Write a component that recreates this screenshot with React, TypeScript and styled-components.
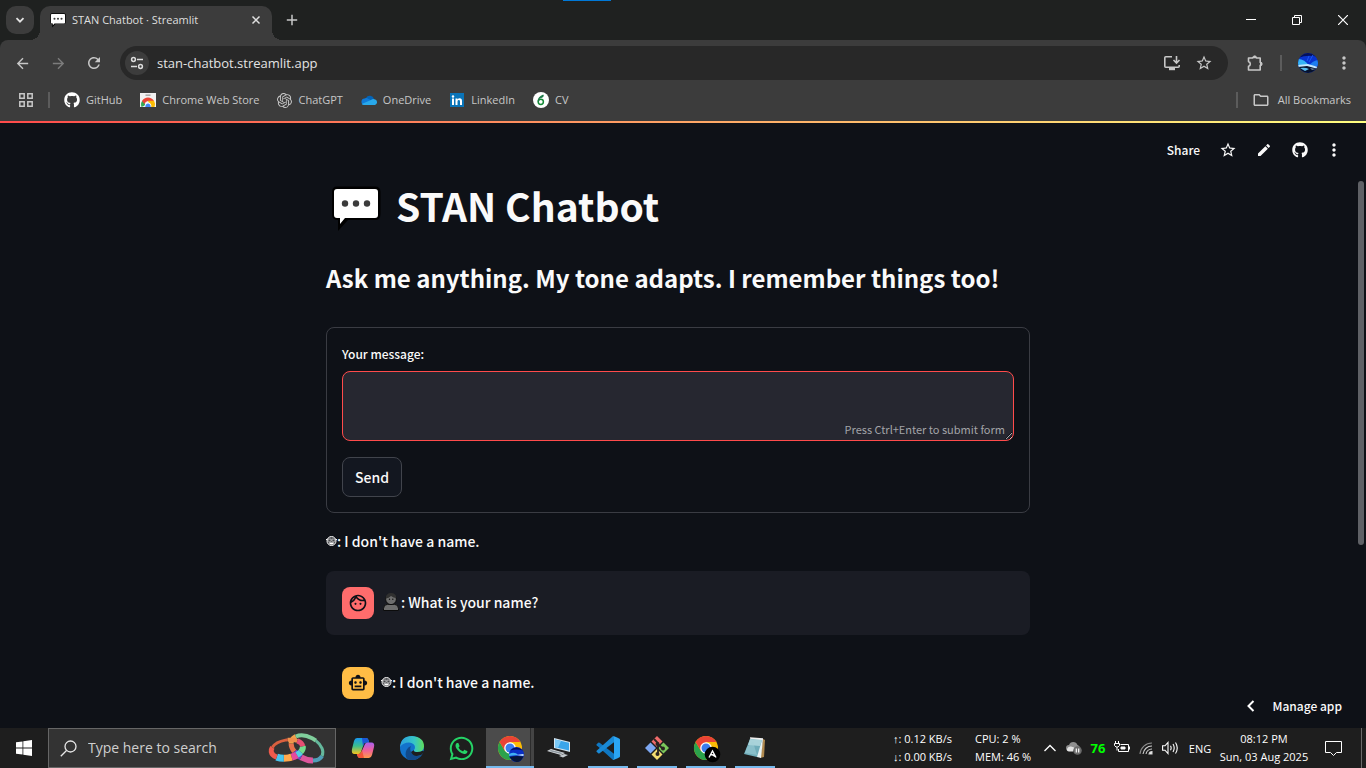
import React from "react";
import styled, { createGlobalStyle, css } from "styled-components";
import {
  MdArrowBack,
  MdArrowForward,
  MdRefresh,
  MdOutlineStarBorder,
  MdEdit,
  MdMoreVert,
  MdOutlineFolder,
  MdOutlineFace,
  MdOutlineSmartToy,
} from "react-icons/md";
import { FaGithub, FaWhatsapp } from "react-icons/fa";
import { SiOpenai } from "react-icons/si";

const uiFont = `"Open Sans", "Noto Sans", sans-serif`;
const appFont = `"Noto Sans CJK SC", "Noto Sans", sans-serif`;

const GlobalStyle = createGlobalStyle`
  * { box-sizing: border-box; }
  body { margin: 0; background: #0e1117; font-family: ${uiFont}; }
  button, input, textarea { font: inherit; color: inherit; }
  svg { display: block; flex: none; }
`;

const Screen = styled.div`
  display: flex;
  flex-direction: column;
  height: 100vh;
  overflow: hidden;
  position: relative;
`;

const TopMarker = styled.div`
  position: absolute;
  top: 0;
  left: 563px;
  width: 48px;
  height: 1px;
  background: #0078d7;
`;

/* ---------- Browser frame ---------- */

const TabStrip = styled.div`
  display: flex;
  align-items: center;
  height: 40px;
  padding-left: 6px;
  background: #1f2120;
  color: #dfdfdf;
`;

const PlainButton = styled.button`
  display: flex;
  align-items: center;
  justify-content: center;
  padding: 0;
  border: 0;
  background: none;
`;

const TabSearch = styled(PlainButton)`
  width: 28px;
  height: 28px;
  border-radius: 10px;
  background: #3c3c3c;
`;

const Tab = styled.div`
  position: relative;
  display: flex;
  align-items: center;
  align-self: flex-end;
  width: 232px;
  height: 34px;
  margin-left: 6px;
  padding: 0 6px 6px 10px;
  border-radius: 10px 10px 0 0;
  background: #3c3c3c;

  &::before,
  &::after {
    content: "";
    position: absolute;
    bottom: 0;
    width: 10px;
    height: 10px;
  }
  &::before {
    left: -10px;
    background: radial-gradient(circle at 0 0, transparent 10px, #3c3c3c 10px);
  }
  &::after {
    right: -10px;
    background: radial-gradient(circle at 100% 0, transparent 10px, #3c3c3c 10px);
  }
`;

const TabTitle = styled.span`
  flex: 1;
  padding-left: 6px;
  font-size: 11px;
  line-height: 16px;
  white-space: nowrap;
`;

const TabButton = styled(PlainButton)`
  width: 20px;
  height: 20px;
`;

const NewTab = styled(PlainButton)`
  width: 28px;
  height: 28px;
  margin-left: 6px;
`;

const WindowControls = styled.div`
  display: flex;
  margin-left: auto;
`;

const WindowButton = styled(PlainButton)`
  width: 46px;
  height: 40px;
`;

const FrameCorner = styled.div`
  background: #1f2120;
`;

const Toolbar = styled.div`
  display: flex;
  align-items: center;
  height: 46px;
  padding: 0 4px;
  border-radius: 8px 8px 0 0;
  background: #3c3c3c;
  color: #c7c7c7;
`;

const ToolButton = styled(PlainButton)<{ $dim?: boolean }>`
  width: 36px;
  height: 34px;
  color: ${(p) => (p.$dim ? "#7c7c7c" : "#c7c7c7")};
`;

const AddressBar = styled.div`
  display: flex;
  flex: 1;
  align-items: center;
  height: 34px;
  margin: 0 9px 0 8px;
  padding: 0 8px 0 5px;
  border-radius: 17px;
  background: #282828;
`;

const SiteInfo = styled(PlainButton)`
  width: 24px;
  height: 24px;
  border-radius: 12px;
  background: #3c3c3c;
`;

const AddressInput = styled.input`
  flex: 1;
  min-width: 0;
  padding: 0 0 0 8px;
  border: 0;
  outline: 0;
  background: none;
  color: #e3e3e3;
  font-size: 13px;
  line-height: 20px;
`;

const PillButton = styled(PlainButton)`
  width: 32px;
  height: 32px;
  color: #c7c7c7;
`;

const Divider = styled.span`
  width: 2px;
  height: 16px;
  background: #5c5c5c;
`;

const ToolDivider = styled(Divider)`
  margin: 0 8px 0 7px;
`;

const BookmarkBar = styled.nav`
  display: flex;
  align-items: center;
  height: 35px;
  padding: 0 15px 7px 18px;
  background: #3c3c3c;
  color: #c7c7c7;
`;

const BookmarkDivider = styled(Divider)`
  margin: 0 14px;
`;

const Bookmarks = styled.div`
  display: flex;
  flex: 1;
  align-items: center;
  gap: 18px;
`;

const BookmarkLink = styled.a`
  display: flex;
  align-items: center;
  gap: 6px;
  color: #c7c7c7;
  font-size: 11px;
  line-height: 16px;
  text-decoration: none;
  white-space: nowrap;
`;

const AllBookmarks = styled(BookmarkLink)`
  gap: 8px;
`;

/* ---------- Streamlit page ---------- */

const Page = styled.main`
  position: relative;
  display: flex;
  flex: 1;
  flex-direction: column;
  min-height: 0;
  background: #0e1117;
  color: #fafafa;
  font-family: ${appFont};
  font-weight: 500;
`;

const Decoration = styled.div`
  flex: none;
  height: 2px;
  background: linear-gradient(90deg, #ff4b4b, #ffff80);
`;

const AppHeader = styled.header`
  display: flex;
  flex: none;
  align-items: center;
  justify-content: flex-end;
  height: 54px;
  padding-right: 16px;
`;

const ShareButton = styled(PlainButton)`
  margin-right: 10px;
  font-size: 12px;
  line-height: 20px;
`;

const AppHeaderButton = styled(PlainButton)<{ $narrow?: boolean }>`
  width: ${(p) => (p.$narrow ? "32px" : "36px")};
  height: 32px;
`;

const Scroller = styled.div`
  display: flex;
  flex: 1;
  min-height: 0;
  overflow: hidden;
`;

const ScrollTrack = styled.div`
  width: 10px;
  padding: 4px 2px;
`;

const ScrollThumb = styled.div`
  width: 6px;
  height: 67%;
  border-radius: 3px;
  background: #5f6166;
`;

const Column = styled.div`
  flex: 1;
  min-width: 0;
`;

const Content = styled.div`
  display: flex;
  flex-direction: column;
  gap: 16px;
  max-width: 704px;
  margin: 0 auto;
  padding-top: 4px;
`;

const Title = styled.h1`
  display: flex;
  align-items: flex-start;
  gap: 15px;
  margin: 0;
  padding-left: 5px;
  height: 54px;
  font-size: 39px;
  font-weight: 700;
  line-height: 48px;
  white-space: nowrap;

  svg {
    margin-top: 5px;
  }
`;

const Subtitle = styled.h3`
  margin: 0;
  padding: 10px 0 16px;
  font-size: 24px;
  font-weight: 700;
  line-height: 34px;
  white-space: nowrap;
`;

const Form = styled.form`
  display: flex;
  flex-direction: column;
  align-items: flex-start;
  padding: 15px;
  border: 1px solid #3a3c43;
  border-radius: 8px;
`;

const Label = styled.label`
  margin-bottom: 6px;
  font-size: 12px;
  line-height: 22px;
`;

const InputWrap = styled.div`
  position: relative;
  display: flex;
  width: 100%;
  margin-bottom: 16px;
`;

const MessageInput = styled.textarea`
  width: 100%;
  height: 70px;
  padding: 12px;
  border: 1px solid #ff4b4b;
  border-radius: 8px;
  outline: 0;
  background: #262730;
  font-size: 14px;
  resize: vertical;
`;

const InputHint = styled.span`
  position: absolute;
  right: 9px;
  bottom: 4px;
  color: #a3a4a8;
  font-size: 11px;
  font-weight: 400;
  line-height: 16px;
  pointer-events: none;
`;

const SendButton = styled(PlainButton)`
  height: 40px;
  padding: 0 12px;
  border: 1px solid #41444c;
  border-radius: 8px;
  background: #131720;
  font-size: 14px;
  line-height: 24px;
`;

const Line = styled.p`
  display: flex;
  align-items: center;
  margin: 0;
  padding-bottom: 2px;
  font-size: 14px;
  line-height: 24px;
  white-space: nowrap;
`;

const ChatMessage = styled.div<{ $user?: boolean }>`
  display: flex;
  align-items: center;
  gap: 7px;
  height: 64px;
  padding: 16px;
  border-radius: 8px;
  ${(p) =>
    p.$user &&
    css`
      background: #1a1c24;
    `}
`;

const Avatar = styled.div<{ $user?: boolean }>`
  display: flex;
  align-items: center;
  justify-content: center;
  width: 32px;
  height: 32px;
  border-radius: 8px;
  background: ${(p) => (p.$user ? "#ff6c6c" : "#ffbd45")};
  color: #0e1117;
`;

const ManageApp = styled(PlainButton)`
  position: absolute;
  right: 24px;
  bottom: 12px;
  gap: 17px;
  font-size: 12px;
  line-height: 20px;
`;

/* ---------- Taskbar ---------- */

const Taskbar = styled.footer`
  display: flex;
  flex: none;
  height: 40px;
  background: #1e1e1e;
  color: #ffffff;
`;

const StartButton = styled(PlainButton)`
  width: 48px;
  height: 40px;
`;

const SearchBox = styled.label`
  display: flex;
  align-items: center;
  width: 288px;
  padding: 0 9px 0 11px;
  border: 1px solid #666666;
  background: #333333;
`;

const SearchInput = styled.input`
  flex: 1;
  min-width: 0;
  padding: 0 0 0 11px;
  border: 0;
  outline: 0;
  background: none;
  font-size: 14px;
  line-height: 20px;

  &::placeholder {
    color: #cfcfcf;
    opacity: 1;
  }
`;

const Apps = styled.div`
  display: flex;
  flex: 1;
  gap: 1px;
  padding-left: 3px;
`;

const AppButton = styled(PlainButton)<{ $open?: boolean; $active?: boolean }>`
  position: relative;
  width: 48px;
  height: 40px;
  background: ${(p) =>
    p.$active ? "linear-gradient(90deg, #4b4b4b 44px, #2c2c2c 44px, #2c2c2c 45px, #444444 45px)" : "none"};

  &::after {
    content: "";
    position: absolute;
    bottom: 0;
    left: ${(p) => (p.$active ? "0" : "4px")};
    right: ${(p) => (p.$active ? "0" : "4px")};
    height: 2px;
    background: ${(p) => (p.$open || p.$active ? "#76b9ed" : "none")};
  }
`;

const Meter = styled.div<{ $wide?: boolean }>`
  display: flex;
  flex-direction: column;
  justify-content: center;
  width: ${(p) => (p.$wide ? "82px" : "63px")};
  font-size: 11px;
  line-height: 18px;
  white-space: nowrap;
`;

const TrayButton = styled(PlainButton)`
  width: 24px;
  height: 40px;
`;

const Temperature = styled.span`
  width: 24px;
  color: #00ff00;
  font-family: "Noto Sans", sans-serif;
  font-size: 13px;
  font-weight: 700;
  line-height: 40px;
  text-align: center;
`;

const LanguageButton = styled(PlainButton)`
  width: 36px;
  font-size: 11px;
`;

const Clock = styled.time`
  display: flex;
  flex-direction: column;
  align-items: center;
  justify-content: center;
  width: 92px;
  font-size: 11px;
  line-height: 18px;
  white-space: nowrap;
`;

const NotificationButton = styled(PlainButton)`
  width: 46px;
`;

const ShowDesktop = styled(PlainButton)`
  width: 5px;
  margin-left: 5px;
  border-left: 1px solid #6a6a6a;
`;

/* ---------- Drawings ---------- */

const SpeechBubble = ({ width, height }: { width: number; height: number }) => (
  <svg width={width} height={height} viewBox="0 0 50 46">
    <path d="M6 .500h38q5.500 0 5.500 5.500v22q0 6-5.500 6H17L7 45V34q-6 0-6-6V6q0-5.500 5-5.500z" fill="#000" />
    <path d="M6 3h38q3 0 3 3v23q0 3-3 3H14l-5 6v-6H6q-3 0-3-3V6q0-3 3-3z" fill="#fff" />
    <circle cx="14" cy="17.500" r="3.200" fill="#3b3b3b" />
    <circle cx="25" cy="17.500" r="3.200" fill="#3b3b3b" />
    <circle cx="36" cy="17.500" r="3.200" fill="#3b3b3b" />
  </svg>
);

const NerdFace = () => (
  <svg width="11" height="12" viewBox="0 0 11 12" overflow="visible">
    <circle cx="5.500" cy="6" r="4.500" fill="#55575b" stroke="#f4f4f4" strokeWidth="1" />
    <path d="M0 4.500h1.500M9.500 4.500H11" stroke="#f4f4f4" strokeWidth="1.200" />
    <path d="M2 4.200h3v2H2zM6 4.200h3v2H6z" fill="#1b1d22" stroke="#d9d9d9" strokeWidth=".700" />
    <path d="M2.800 7.600h5.400Q7.600 9.600 5.500 9.600T2.800 7.600z" fill="#fff" />
  </svg>
);

const PersonSilhouette = () => (
  <svg width="20" height="20" viewBox="0 0 20 20">
    <path d="M2.500 18.500v-2q0-4 4-4.200h7q4 .200 4 4.200v2z" fill="#6e6e6e" stroke="#0c0c0c" />
    <circle cx="10" cy="7.200" r="5.400" fill="#6e6e6e" stroke="#0c0c0c" />
    <path d="M4.600 6.500q.400-5.500 5.400-5.500t5.400 5q-3 0-5.400-2Q8 6 4.600 6.500z" fill="#303030" />
    <circle cx="8.500" cy="7.300" r=".7" fill="#111" />
    <circle cx="11.800" cy="7.300" r=".7" fill="#111" />
  </svg>
);

const ChromeLogo = ({ children }: { children?: React.ReactNode }) => (
  <svg width="24" height="24" viewBox="0 0 24 24" overflow="visible">
    <circle cx="12" cy="12" r="12" fill="#fbbc05" />
    <path d="M12 24A12 12 0 0 1 1.600 6L7 15l5 3 2.500 0z" fill="#2ba24c" />
    <path d="M7 15 1.600 6A12 12 0 0 1 22.400 6H12z" fill="#ea4335" />
    <path d="M12 24l5-9-5 3-5-3z" fill="#2ba24c" />
    <circle cx="12" cy="12" r="5.800" fill="#fff" />
    <circle cx="12" cy="12" r="4.500" fill="#3b7ded" />
    {children}
  </svg>
);

const NightSky = () => (
  <svg width="20" height="20" viewBox="0 0 20 20">
    <defs>
      <clipPath id="skyClip">
        <circle cx="10" cy="10" r="10" />
      </clipPath>
    </defs>
    <g clipPath="url(#skyClip)">
      <rect width="20" height="20" fill="#0833d0" />
      <path d="M0 0h20v4Q10 1 0 5z" fill="#04105c" />
      <path d="M11 3l-2 5M15 2l-4 7" stroke="#1b58f0" strokeWidth="1" />
      <path d="M0 6q7 0 11 7L0 13z" fill="#35b4f6" />
      <path d="M20 7q-6 1-9 6h9z" fill="#1e7df0" />
      <path d="M0 12l10-1 10 3v2l-12-2-8 1z" fill="#c4e8ff" />
      <path d="M0 14l9-1 11 3v4H0z" fill="#07122c" />
      <path d="M2 15q5-1 9 1l-4 2z" fill="#58bdf0" />
      <path d="M12 15l6 1-4 1z" fill="#6b7f96" />
    </g>
  </svg>
);

const InstallGlyph = () => (
  <svg width="18" height="18" viewBox="0 0 18 18" fill="none" stroke="#c7c7c7" strokeWidth="1.600">
    <path d="M9 2.800H2.800q-1 0-1 1v8.400q0 1 1 1h12.400q1 0 1-1V11" />
    <path d="M6 15h6" strokeWidth="2.400" />
    <path d="M13.500 2v6.500M10.500 6l3 3 3-3" />
  </svg>
);

const PuzzleGlyph = () => (
  <svg width="18" height="18" viewBox="0 0 18 18" fill="none" stroke="#c7c7c7" strokeWidth="1.600">
    <path d="M2.500 4h4.300V3.500h3.600V4h3.800v4.500h.800v2.800h-.800V16H2.500v-3.600q1.800-.300 1.800-2.400T2.500 7.600z" strokeLinejoin="round" />
    <path d="M7 3.500a1.700 1.700 0 0 1 3.400 0zM14.500 8.200a1.700 1.700 0 0 1 0 3.400z" fill="#c7c7c7" strokeWidth=".800" />
  </svg>
);

const WebStoreLogo = () => (
  <svg width="16" height="16" viewBox="0 0 16 16">
    <path d="M0 1h16v14H0z" fill="#f1f1f1" />
    <path d="M5.500 2.500h5v1.300h-5z" fill="#9a9a9a" />
    <path d="M1.500 15a6.500 6.500 0 0 1 1-6.500L6 13z" fill="#34a853" />
    <path d="M2 9a7 7 0 0 1 12 0H8a4 4 0 0 0-3.500 3z" fill="#ea4335" />
    <path d="M8 8.800h6A7 7 0 0 1 14.500 15H10z" fill="#fbbc05" />
    <path d="M4.800 15a3.400 3.400 0 1 1 6.400 0z" fill="#fff" />
    <path d="M5.400 15a2.700 2.700 0 1 1 5.200 0z" fill="#4285f4" />
  </svg>
);

const OneDriveLogo = () => (
  <svg width="16" height="16" viewBox="0 0 16 16">
    <path d="M5 6a4.300 4.300 0 0 1 8 1l-3 4-7-3z" fill="#0364b8" />
    <path d="M3.500 6.500q2-1 4 .4L12 9l-9 4A3.300 3.300 0 0 1 3.500 6.500z" fill="#0f7ad8" />
    <path d="M10 8q1.500-1.300 3.500-.8a3 3 0 0 1 .5 5.800H3q-1.500 0-2.300-1z" fill="#28a8ea" />
  </svg>
);

const LinkedInLogo = () => (
  <svg width="16" height="16" viewBox="0 0 16 16">
    <rect x="1" y="1" width="14" height="14" fill="#0a74b8" />
    <path d="M3 6.500h2V13H3zM6.500 6.500h2v1q.8-1.200 2.200-1.200 2.300 0 2.300 2.700v4h-2V9.500q0-1.400-1.200-1.400T8.500 9.500V13h-2z" fill="#fff" />
    <circle cx="4" cy="4.500" r="1.200" fill="#fff" />
  </svg>
);

const OverleafLogo = () => (
  <svg width="16" height="16" viewBox="0 0 16 16">
    <circle cx="8" cy="8" r="8" fill="#fff" />
    <circle cx="7.800" cy="9.800" r="2.600" fill="none" stroke="#138a36" strokeWidth="1.500" />
    <path d="M5.200 9.500Q5.500 5 10.500 3.200M7 5.500Q9 6 10.500 3.500" fill="none" stroke="#1f7a4a" strokeWidth="1.400" />
  </svg>
);

type Band = { from: number; to: number; color: string; width: number };

/* Bands run clockwise from three o'clock, as percentages of the ring. */
const backRing: Band[] = [
  { from: 0, to: 14, color: "#4f9fb8", width: 4 },
  { from: 12, to: 26, color: "#dd569c", width: 6 },
  { from: 26, to: 36, color: "#6d45c8", width: 6 },
  { from: 36, to: 46, color: "#e8714a", width: 5 },
  { from: 46, to: 56, color: "#f0a04c", width: 5 },
  { from: 56, to: 80, color: "#80cf9c", width: 4 },
  { from: 80, to: 100, color: "#64b89c", width: 3 },
];

const frontRing: Band[] = [
  { from: 0, to: 8, color: "#74dc8e", width: 6 },
  { from: 8, to: 14, color: "#54cfe0", width: 6 },
  { from: 14, to: 21, color: "#e64a9c", width: 7 },
  { from: 21, to: 31, color: "#ffa84c", width: 7 },
  { from: 31, to: 40, color: "#46c5ee", width: 7 },
  { from: 40, to: 56, color: "#ee5a4c", width: 5 },
  { from: 56, to: 78, color: "#d9603f", width: 3 },
  { from: 78, to: 90, color: "#f0904c", width: 4 },
  { from: 90, to: 100, color: "#e64f72", width: 5 },
];

const Ring = ({ bands, rx, ry, transform }: { bands: Band[]; rx: number; ry: number; transform: string }) => (
  <g transform={transform}>
    {bands.map((b) => (
      <ellipse
        key={b.from}
        rx={rx}
        ry={ry}
        pathLength="100"
        stroke={b.color}
        strokeWidth={b.width}
        strokeDasharray={`${b.to - b.from} 100`}
        strokeDashoffset={-b.from}
      />
    ))}
  </g>
);

const RingsArt = () => (
  <svg width="58" height="34" viewBox="0 0 58 34" fill="none">
    <Ring bands={backRing} rx={17} ry={11} transform="translate(39 17) rotate(28)" />
    <Ring bands={frontRing} rx={16} ry={9} transform="translate(19 18) rotate(-10)" />
  </svg>
);

const CopilotLogo = () => (
  <svg width="24" height="24" viewBox="0 0 24 24">
    <defs>
      <linearGradient id="copA" x1="0" y1="0" x2="0" y2="1">
        <stop offset="0" stopColor="#1797f0" />
        <stop offset=".5" stopColor="#3bbf8e" />
        <stop offset="1" stopColor="#f5c51e" />
      </linearGradient>
      <linearGradient id="copB" x1="0" y1="0" x2="0" y2="1">
        <stop offset="0" stopColor="#a860f0" />
        <stop offset=".5" stopColor="#f0609a" />
        <stop offset="1" stopColor="#ff9a4a" />
      </linearGradient>
    </defs>
    <path d="M6 2h9q2 0 2.500 2l.7 2.500h-3q-2 0-2.600 2L10 16q-.6 2-2.500 2H3.500Q0 18 1 13L3 5q.8-3 3-3z" fill="url(#copA)" />
    <path d="M11 2h4q2 0 2.500 2l.7 2.500h-3q-2 0-2.600 2l-.6 2z" fill="#1b57d6" />
    <path d="M18 22H9q-2 0-2.500-2l-.7-2h2q2 0 2.600-2L14 8q.6-1.500 2.500-1.500h4Q24 6.500 23 11l-2 8q-.8 3-3 3z" fill="url(#copB)" />
    <path d="M13 22H9q-2 0-2.500-2l-.7-2h2q2 0 2.600-2l.6-2z" fill="#f2553a" />
  </svg>
);

const EdgeLogo = () => (
  <svg width="24" height="24" viewBox="0 0 24 24">
    <defs>
      <linearGradient id="edgeTop" x1="0" y1="0" x2="1" y2="0">
        <stop offset="0" stopColor="#2b9fe0" />
        <stop offset=".6" stopColor="#37c6c5" />
        <stop offset="1" stopColor="#5fdd5a" />
      </linearGradient>
    </defs>
    <circle cx="12" cy="12" r="12" fill="#1373cc" />
    <path d="M0 11Q1 0 12 0q12 1 12 10.500Q23.500 16 17.500 16q-4 0-3.500-2 1-1 1-3-.5-4-6-4.500Q3 6.500 0 11z" fill="url(#edgeTop)" />
    <path d="M8 24Q4 20 6.500 14 8 11 11 10q-2 4 1 7.500 4 3.500 9.500 1.300Q17 25.500 8 24z" fill="#114a8b" />
    <path d="M14 14q-1 2 3.500 2 3 0 5-1.200l2 .8-3 3.200Q14 22 11 16z" fill="#1e1e1e" />
  </svg>
);

const ComputerArt = () => (
  <svg width="24" height="24" viewBox="0 0 24 24">
    <path d="M7 2l16 4v10L7 12z" fill="#d6e6f0" />
    <path d="M8 3.500l14 3.300v7.800L8 11.200z" fill="#3aa5ea" />
    <path d="M8 3.500l6 1.400-3 7L8 11z" fill="#7ccaf7" />
    <path d="M0 15l4-2 14 4-4 2z" fill="#d9dde0" />
    <path d="M2 15l2-1 12 3-2 1z" fill="#8b969d" />
    <path d="M12 20l5-2 4 1-5 2.500z" fill="#c5cbd0" />
  </svg>
);

const VsCodeLogo = () => (
  <svg width="24" height="24" viewBox="0 0 24 24">
    <path d="M.600 8.200 2.200 6.700q.700-.500 1.400 0L18 17.800V23l-1.500.500L.600 9.300q-.500-.600 0-1.100z" fill="#0f77c2" />
    <path d="M.600 15.800l1.600 1.500q.700.500 1.400 0L18 6.200V1L16.500.500.600 14.700q-.500.600 0 1.100z" fill="#1a8ad6" />
    <path d="M17.500 0q.500 0 6 2.700.500.300.500 1v16.600q0 .700-.500 1-5.500 2.700-6 2.700-.800 0-1.500-.700 2 .700 2-1.300V2q0-2-2-1.300.700-.700 1.500-.700z" fill="#2aa5f4" />
  </svg>
);

const GitLogo = () => (
  <svg width="24" height="24" viewBox="0 0 24 24">
    <path d="M12 0l5.500 5.500L12 11 6.500 5.500z" fill="#ef6b6b" />
    <path d="M18.500 6.500 24 12l-5.500 5.500L13 12z" fill="#7cc75b" />
    <path d="M12 13l5.500 5.500L12 24l-5.500-5.500z" fill="#f4dd70" />
    <path d="M5.500 6.500 11 12l-5.500 5.500L0 12z" fill="#7da7f2" />
    <path d="M9 3l4 4v11M13 8l5 5" fill="none" stroke="#2a2320" strokeWidth="1.800" />
    <circle cx="12.500" cy="8" r="2" fill="#2a2320" />
    <circle cx="12.500" cy="18" r="2" fill="#2a2320" />
    <circle cx="18" cy="12.500" r="2" fill="#2a2320" />
  </svg>
);

const NotepadArt = () => (
  <svg width="24" height="24" viewBox="0 0 24 24">
    <path d="M20 3l2 1-1 17-4 1z" fill="#b08a50" />
    <path d="M8 2l12 1-2 19-4-1z" fill="#e8f2f3" />
    <path d="M7 3l12 1-5 17-13-3z" fill="#6fadba" />
    <path d="M7 3l12 1-2 6-12-1z" fill="#a9d3da" />
    <path d="M4 11l6-5 4 13-12-2z" fill="#a3d2da" opacity=".5" />
    <path d="M7 2l13 1" stroke="#eee" strokeWidth="1.500" />
  </svg>
);

const bookmarks = [
  { label: "GitHub", icon: <FaGithub size={16} color="#fff" /> },
  { label: "Chrome Web Store", icon: <WebStoreLogo /> },
  { label: "ChatGPT", icon: <SiOpenai size={15} /> },
  { label: "OneDrive", icon: <OneDriveLogo /> },
  { label: "LinkedIn", icon: <LinkedInLogo /> },
  { label: "CV", icon: <OverleafLogo /> },
];

const apps = [
  { label: "Copilot", icon: <CopilotLogo /> },
  { label: "Edge", icon: <EdgeLogo /> },
  { label: "WhatsApp", icon: <FaWhatsapp size={27} color="#25d366" /> },
  {
    label: "Chrome",
    active: true,
    icon: (
      <ChromeLogo>
        <circle cx="18.500" cy="18.500" r="7.500" fill="#0a2fc4" />
        <path d="M12 14.500q6.500-6 13 0-6.500-2-13 0z" fill="#04105c" />
        <path d="M11 18q6-3 9 1l-9 1z" fill="#3fb0f4" />
        <path d="M18 19l7.500-1v2z" fill="#c4e8ff" />
        <path d="M11.500 21q6-1.500 14-.500-3 6-7 5.500t-7-5z" fill="#07163a" />
      </ChromeLogo>
    ),
  },
  { label: "Remote desktop", icon: <ComputerArt /> },
  { label: "Visual Studio Code", open: true, icon: <VsCodeLogo /> },
  { label: "Git", open: true, icon: <GitLogo /> },
  {
    label: "Chrome profile",
    open: true,
    icon: (
      <ChromeLogo>
        <circle cx="18.500" cy="18.500" r="7.800" fill="#000" />
        <path d="M15 21.500l3.500-6.500 3.500 6.500M16.500 18.500q3 0 4.500 2" fill="none" stroke="#fff" strokeWidth="1.400" />
      </ChromeLogo>
    ),
  },
  { label: "Notepad", open: true, icon: <NotepadArt /> },
];

export default function App() {
  return (
    <Screen>
      <GlobalStyle />
      <TabStrip>
        <TabSearch aria-label="Search tabs">
          <svg width="10" height="10" viewBox="0 0 10 10" fill="none" stroke="#e3e3e3" strokeWidth="1.800">
            <path d="M1.500 3.200 5 6.700l3.500-3.500" />
          </svg>
        </TabSearch>
        <Tab>
          <SpeechBubble width={16} height={15} />
          <TabTitle>STAN Chatbot · Streamlit</TabTitle>
          <TabButton aria-label="Close tab">
            <svg width="10" height="10" viewBox="0 0 10 10" stroke="#dfdfdf" strokeWidth="1.500">
              <path d="M1.500 1.500l7 7M8.500 1.500l-7 7" />
            </svg>
          </TabButton>
        </Tab>
        <NewTab aria-label="New tab">
          <svg width="12" height="12" viewBox="0 0 12 12" stroke="#c7c7c7" strokeWidth="1.500">
            <path d="M6 .800v10.400M.800 6h10.400" />
          </svg>
        </NewTab>
        <WindowControls>
          <WindowButton aria-label="Minimize">
            <svg width="10" height="10" viewBox="0 0 10 10" stroke="#fff">
              <path d="M0 4.500h10" />
            </svg>
          </WindowButton>
          <WindowButton aria-label="Restore">
            <svg width="10" height="10" viewBox="0 0 10 10" stroke="#fff" fill="none">
              <path d="M.500 2.500h7v7h-7zM2.500 2.500v-2h7v7h-2" />
            </svg>
          </WindowButton>
          <WindowButton aria-label="Close">
            <svg width="10" height="10" viewBox="0 0 10 10" stroke="#fff" strokeWidth="1.200">
              <path d="M0 0l10 10M10 0L0 10" />
            </svg>
          </WindowButton>
        </WindowControls>
      </TabStrip>
      <FrameCorner>
        <Toolbar>
          <ToolButton aria-label="Back"><MdArrowBack size={17} /></ToolButton>
          <ToolButton aria-label="Forward" $dim><MdArrowForward size={17} /></ToolButton>
          <ToolButton aria-label="Reload"><MdRefresh size={18} /></ToolButton>
          <AddressBar>
            <SiteInfo aria-label="Site information">
              <svg width="14" height="14" viewBox="0 0 14 14" fill="none" stroke="#dcdcdc" strokeWidth="1.500">
                <circle cx="3.500" cy="3.500" r="1.900" />
                <path d="M7 3.500h6M1 10.500h6" />
                <circle cx="10.500" cy="10.500" r="1.900" />
              </svg>
            </SiteInfo>
            <AddressInput aria-label="Address" defaultValue="stan-chatbot.streamlit.app" />
            <PillButton aria-label="Install app"><InstallGlyph /></PillButton>
            <PillButton aria-label="Bookmark this page"><MdOutlineStarBorder size={18} /></PillButton>
          </AddressBar>
          <ToolButton aria-label="Extensions"><PuzzleGlyph /></ToolButton>
          <ToolDivider />
          <ToolButton aria-label="Profile"><NightSky /></ToolButton>
          <ToolButton aria-label="Menu"><MdMoreVert size={20} /></ToolButton>
        </Toolbar>
      </FrameCorner>
      <BookmarkBar>
        <svg width="16" height="16" viewBox="0 0 16 16" fill="none" stroke="#c7c7c7" strokeWidth="1.500">
          <path d="M1.800 1.800h4.400v4.400H1.800zM9.800 1.800h4.400v4.400H9.800zM1.800 9.800h4.400v4.400H1.800zM9.800 9.800h4.400v4.400H9.800z" />
        </svg>
        <BookmarkDivider />
        <Bookmarks>
          {bookmarks.map((b) => (
            <BookmarkLink key={b.label} href="#">
              {b.icon}
              {b.label}
            </BookmarkLink>
          ))}
        </Bookmarks>
        <BookmarkDivider />
        <AllBookmarks href="#">
          <MdOutlineFolder size={18} />
          All Bookmarks
        </AllBookmarks>
      </BookmarkBar>

      <Decoration />
      <Page>
        <AppHeader>
          <ShareButton>Share</ShareButton>
          <AppHeaderButton aria-label="Favorite"><MdOutlineStarBorder size={18} /></AppHeaderButton>
          <AppHeaderButton aria-label="Edit"><MdEdit size={16} /></AppHeaderButton>
          <AppHeaderButton aria-label="View source"><FaGithub size={16} /></AppHeaderButton>
          <AppHeaderButton aria-label="More" $narrow><MdMoreVert size={20} /></AppHeaderButton>
        </AppHeader>
        <Scroller>
          <Column>
            <Content>
              <Title>
                <SpeechBubble width={50} height={46} />
                STAN Chatbot
              </Title>
              <Subtitle>Ask me anything. My tone adapts. I remember things too!</Subtitle>
              <Form onSubmit={(e) => e.preventDefault()}>
                <Label htmlFor="message">Your message:</Label>
                <InputWrap>
                  <MessageInput id="message" />
                  <InputHint>Press Ctrl+Enter to submit form</InputHint>
                </InputWrap>
                <SendButton type="submit">Send</SendButton>
              </Form>
              <Line><NerdFace />: I don't have a name.</Line>
              <ChatMessage $user>
                <Avatar $user><MdOutlineFace size={20} /></Avatar>
                <Line><PersonSilhouette />: What is your name?</Line>
              </ChatMessage>
              <ChatMessage>
                <Avatar><MdOutlineSmartToy size={20} /></Avatar>
                <Line><NerdFace />: I don't have a name.</Line>
              </ChatMessage>
            </Content>
          </Column>
          <ScrollTrack><ScrollThumb /></ScrollTrack>
        </Scroller>
        <ManageApp>
          <svg width="10" height="12" viewBox="0 0 10 12" fill="none" stroke="#fff" strokeWidth="2">
            <path d="M7.500 1 2.500 6l5 5" />
          </svg>
          Manage app
        </ManageApp>
      </Page>

      <Taskbar>
        <StartButton aria-label="Start">
          <svg width="16" height="16" viewBox="0 0 16 16" fill="#fff">
            <path d="M0 2.300 6.500 1.400v6.200H0zM7.300 1.300 16 0v7.600H7.300zM0 8.400h6.500v6.200L0 13.700zM7.300 8.400H16V16l-8.700-1.300z" />
          </svg>
        </StartButton>
        <SearchBox>
          <svg width="17" height="17" viewBox="0 0 17 17" fill="none" stroke="#e6e6e6" strokeWidth="1.300">
            <circle cx="10.500" cy="6.500" r="5.500" />
            <path d="M6.500 10.500.800 16.200" />
          </svg>
          <SearchInput placeholder="Type here to search" aria-label="Type here to search" />
          <RingsArt />
        </SearchBox>
        <Apps>
          {apps.map((a) => (
            <AppButton key={a.label} aria-label={a.label} $open={a.open} $active={a.active}>
              {a.icon}
            </AppButton>
          ))}
        </Apps>
        <Meter $wide>
          <span>↑: 0.12 KB/s</span>
          <span>↓: 0.00 KB/s</span>
        </Meter>
        <Meter>
          <span>CPU: 2 %</span>
          <span>MEM: 46 %</span>
        </Meter>
        <TrayButton aria-label="Show hidden icons">
          <svg width="12" height="8" viewBox="0 0 12 8" fill="none" stroke="#fff" strokeWidth="1.300">
            <path d="M.500 7 6 1.500 11.500 7" />
          </svg>
        </TrayButton>
        <TrayButton aria-label="OneDrive paused">
          <svg width="16" height="14" viewBox="0 0 16 14">
            <path d="M3 10a3 3 0 0 1 0-6 4.500 4.500 0 0 1 8.500 0q2 .500 2.500 2.500L8 10z" fill="#8f8f8f" />
            <path d="M1 8q1-3 4-2.500T9 7l-2 3.500H3Q.500 10 1 8z" fill="#e2e2e2" />
            <circle cx="11.500" cy="9.500" r="4.300" fill="#6b6b6b" />
            <path d="M10.300 7.500v4M12.700 7.500v4" stroke="#fff" strokeWidth="1.200" />
          </svg>
        </TrayButton>
        <Temperature>76</Temperature>
        <TrayButton aria-label="Battery charging">
          <svg width="16" height="14" viewBox="0 0 16 14" fill="none" stroke="#fff">
            <path d="M6.500 3.500h8v7h-10V8M15.500 5.500v3M1.500 0v2M4.500 0v2M.500 2.500h5v2L4 6H2L.500 4.500zM3 6v3.500" />
            <path d="M7 6h4v2H7z" fill="#fff" />
          </svg>
        </TrayButton>
        <TrayButton aria-label="Wi-Fi">
          <svg width="14" height="14" viewBox="0 0 14 14" fill="none" stroke="#d0d0d0" strokeWidth="1.100">
            <path d="M1 13A12 12 0 0 1 13 2" stroke="#8c8c8c" />
            <path d="M4 13A9 9 0 0 1 13 5M7 13A6 6 0 0 1 13 8" />
            <path d="M10 13a3 3 0 0 1 3-2.500V13z" fill="#fff" />
          </svg>
        </TrayButton>
        <TrayButton aria-label="Volume">
          <svg width="17" height="14" viewBox="0 0 17 14" fill="none" stroke="#fff" strokeWidth="1.100">
            <path d="M.600 4.800H3l3-3.300v11L3 9.200H.600zM8.500 4.800q1.300 2.200 0 4.400M11 3q2.400 4 0 8M13.500 1.500q3.500 5.500 0 11" />
          </svg>
        </TrayButton>
        <LanguageButton>ENG</LanguageButton>
        <Clock>
          <span>08:12 PM</span>
          <span>Sun, 03 Aug 2025</span>
        </Clock>
        <NotificationButton aria-label="Notifications">
          <svg width="17" height="17" viewBox="0 0 17 17" fill="none" stroke="#fff">
            <path d="M.500 1.500h16v11h-5L8.500 15.500l-3-3h-5z" />
          </svg>
        </NotificationButton>
        <ShowDesktop aria-label="Show desktop" />
      </Taskbar>
      <TopMarker />
    </Screen>
  );
}
